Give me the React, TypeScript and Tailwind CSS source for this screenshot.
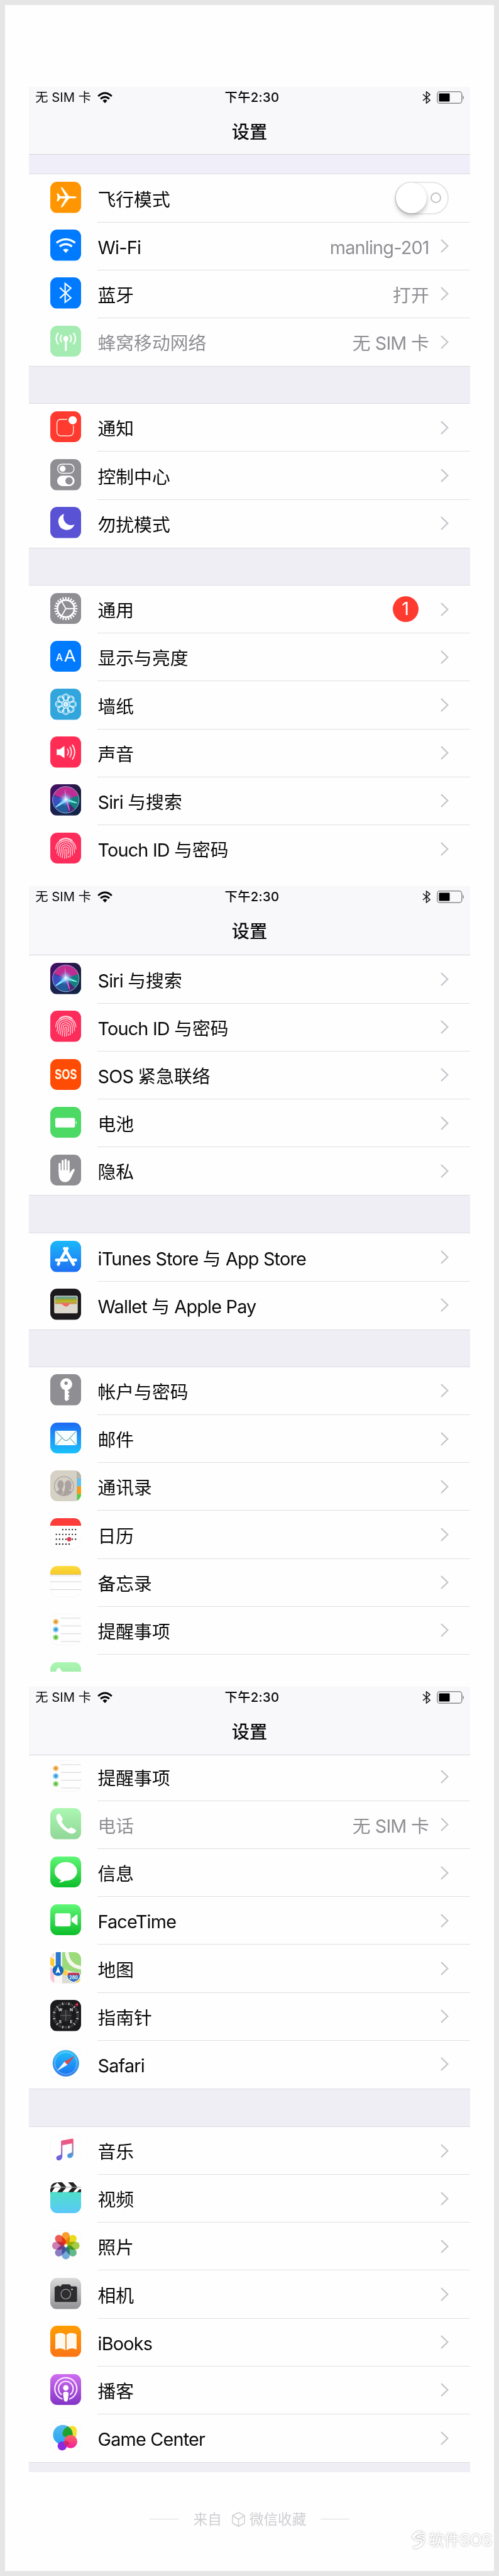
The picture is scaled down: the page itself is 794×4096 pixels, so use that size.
import type { ReactNode } from 'react';

const INK = '#a9a2a0';

const Tile = ({ fill, children }: { fill: string; children?: ReactNode }) => (
    <svg viewBox="0 0 68 68" className="block size-[49.5px] shrink-0 overflow-hidden rounded-[11px]">
        <rect width="68" height="68" fill={fill} />
        {children}
    </svg>
);

const PlainTile = ({ children }: { children: ReactNode }) => (
    <Tile fill="#fefefe">
        <rect x="0.5" y="0.5" width="67" height="67" rx="15" fill="none" stroke="#f3f2f5" />
        {children}
    </Tile>
);

const Gradient = ({ id, from, to }: { id: string; from: string; to: string }) => (
    <linearGradient id={id} x1="0" y1="0" x2="0" y2="1">
        <stop offset="0" stopColor={from} />
        <stop offset="1" stopColor={to} />
    </linearGradient>
);

const angles = (n: number) => Array.from({ length: n }, (_, i) => (i * 360) / n);

const icons: Record<string, ReactNode> = {
    airplane: (
        <Tile fill="#ff9500">
            <path
                d="M14 25.500L17.500 25.500L22 31.500L33 31.500L22.500 12.500L26.500 12.500L41 31.500L53 32Q57.500 32.500 57.500 34Q57.500 35.500 53 36L41 36.500L26.500 55.500L22.500 55.500L33 36.500L22 36.500L17.500 42.500L14 42.500L16 34Z"
                fill="#fffdf5"
            />
        </Tile>
    ),
    wifi: (
        <Tile fill="#007aff">
            <g fill="none" stroke="#f4fbff" strokeWidth="4.600">
                <path d="M13.500 29Q34 13.500 54.500 29" />
                <path d="M20.500 37Q34 27 47.500 37" />
            </g>
            <path d="M27.500 44Q34 39.500 40.500 44L34 51Z" fill="#f4fbff" />
        </Tile>
    ),
    bluetooth: (
        <Tile fill="#007aff">
            <path d="M21 22.500L45 45L32.500 54.500V13.500L45 23.500L21 45.500" fill="none" stroke="#f4fbff" strokeWidth="3" />
        </Tile>
    ),
    cellular: (
        <Tile fill="#a5ecb2">
            <circle cx="34" cy="28" r="5.500" fill="#fff" />
            <path d="M34 28V55" stroke="#fff" strokeWidth="4" />
            <g fill="none" stroke="#fff" strokeWidth="3">
                <path d="M25 20Q19 28 25 36M43 20Q49 28 43 36" />
                <path d="M17.500 15.500Q8 28 17.500 40.500M50.500 15.500Q60 28 50.500 40.500" />
            </g>
        </Tile>
    ),
    notifications: (
        <Tile fill="#ff3b30">
            <path d="M37 17.500H24Q14.500 17.500 14.500 27V44Q14.500 53.500 24 53.500H41Q50.500 53.500 50.500 44V31" fill="none" stroke="#ffe9e2" strokeWidth="1.900" />
            <circle cx="49" cy="19.500" r="9" fill="#fff" />
        </Tile>
    ),
    control: (
        <Tile fill="#8e8e93">
            <rect x="16" y="11" width="36" height="20" rx="10" fill="none" stroke="#fff" strokeWidth="2" />
            <circle cx="27" cy="21" r="6.500" fill="#fff" />
            <rect x="15" y="36" width="38" height="23" rx="11.500" fill="#fff" />
            <circle cx="41" cy="47.500" r="8" fill="#8e8e93" />
        </Tile>
    ),
    moon: (
        <Tile fill="#5a52d5">
            <path d="M30 15Q17 20 17.500 33Q19 48 34 50.500Q48 51 53 38.500Q43 42.500 35 36.500Q26 28 30 15Z" fill="#fff" />
        </Tile>
    ),
    gear: (
        <Tile fill="#8e8e93">
            <g stroke="#fff" strokeWidth="3">
                {angles(24).map((a) => (
                    <path key={a} d="M34 14V8.500" transform={`rotate(${a} 34 34)`} />
                ))}
                <circle cx="34" cy="34" r="18.500" fill="none" strokeWidth="3.600" />
                <path d="M34 34H52M34 34L25 18.400M34 34L25 49.600" strokeWidth="2.600" />
            </g>
        </Tile>
    ),
    display: (
        <Tile fill="#007aff">
            <text x="12" y="44" fontSize="22" fontWeight="500" fill="#fff" className="font-['Inter']">A</text>
            <text x="30" y="46" fontSize="35" fill="#fff" className="font-['Inter']" textLength="26" lengthAdjust="spacingAndGlyphs">A</text>
        </Tile>
    ),
    wallpaper: (
        <Tile fill="#32a6dc">
            <g fill="none" stroke="#e8faff" strokeWidth="1.800">
                {angles(8).map((a) => (
                    <g key={a} transform={`rotate(${a} 34 34)`}>
                        <circle cx="34" cy="18.500" r="7" />
                        <ellipse cx="34" cy="23" rx="4.700" ry="9.500" strokeWidth="1.200" />
                    </g>
                ))}
                <circle cx="34" cy="34" r="4" />
            </g>
        </Tile>
    ),
    sound: (
        <Tile fill="#ff2d55">
            <path d="M14 28H21L31 20.500V47.500L21 40.500H14Z" fill="#fff" />
            <g fill="none" stroke="#ffe4ea" strokeWidth="2.600">
                <path d="M37 27Q42.500 34 37 41.500" />
                <path d="M42.500 22.500Q50 34 42.500 46" />
                <path d="M48 18Q59 34 48 50.500" />
            </g>
        </Tile>
    ),
    siri: (
        <Tile fill="url(#siri-bg)">
            <defs>
                <linearGradient id="siri-bg" x1="0" y1="0" x2="1" y2="0.6">
                    <stop offset="0" stopColor="#450f68" />
                    <stop offset="1" stopColor="#142036" />
                </linearGradient>
                <radialGradient id="siri-glow">
                    <stop offset="0" stopColor="#fff" />
                    <stop offset="0.35" stopColor="#9fd8ff" stopOpacity="0.7" />
                    <stop offset="1" stopColor="#4a78e0" stopOpacity="0" />
                </radialGradient>
                <clipPath id="siri-orb">
                    <circle cx="34" cy="34" r="29" />
                </clipPath>
            </defs>
            <path d="M0 40H68V68H0Z" fill="#14264f" opacity="0.7" />
            <circle cx="34" cy="34" r="29" fill="#4b3596" />
            <g clipPath="url(#siri-orb)">
                <path d="M34 34L5 22Q18 0 40 4Q58 8 63 26Z" fill="#d42a93" opacity="0.85" />
                <path d="M34 34L62 24Q66 44 52 58Z" fill="#157f80" />
                <path d="M34 34L4 25Q0 44 12 54Z" fill="#3a4ec0" />
                <path d="M34 34L12 54Q26 66 40 63Z" fill="#225c9b" />
                <path d="M34 34L40 63Q50 62 54 55Z" fill="#4a2a78" />
            </g>
            <path d="M34 31L12 50L37 36Z" fill="#7fe9ff" stroke="#7fe9ff" strokeWidth="2" />
            <path d="M34 31L58 41L36 36Z" fill="#7dffe0" stroke="#7dffe0" strokeWidth="1.500" />
            <path d="M33 31L42 58L37 34Z" fill="#ef6be0" stroke="#ef6be0" strokeWidth="1.500" />
            <path d="M36 33L32 9L31 34Z" fill="#ff9ade" opacity="0.7" />
            <circle cx="34" cy="33" r="16" fill="url(#siri-glow)" />
            <circle cx="34" cy="34" r="29" fill="none" stroke="#a3b7dc" strokeWidth="1.300" />
        </Tile>
    ),
    touch: (
        <Tile fill="#fc2d5a">
            <g fill="none" stroke="#ffd3dc" strokeWidth="1.800" strokeLinecap="round">
                <path d="M20 17Q34 7 48 17" />
                <path d="M12 36Q12 28 16.500 22Q34 5.500 51 22Q56 28 56 36" />
                <path d="M14.500 45Q16 41 16 34C16.500 12 51.500 12 52 34Q53 40 53 44" />
                <path d="M17.500 49.500Q20 43 20 35C20 17.500 48 17.500 48 35Q49 43 48.500 49" />
                <path d="M21.500 52.500Q24 44 24 36C24 23 44 23 44 36Q45 46 43.500 52.500" />
                <path d="M26 55Q28 45 28 37C28 29 40 29 40 37V46M40 51V54" />
                <path d="M31 56Q32.500 46 32 37.500Q34 33.500 36 37.500Q37 47 35.500 55.500" />
            </g>
        </Tile>
    ),
    sos: (
        <Tile fill="#ff4c05">
            <text x="34" y="44.500" textAnchor="middle" fontSize="29" fontWeight="700" fill="#fff6e6" className="font-['Inter']" textLength="49" lengthAdjust="spacingAndGlyphs">SOS</text>
        </Tile>
    ),
    battery: (
        <Tile fill="#4cd964">
            <rect x="11" y="24" width="43" height="21" rx="2.500" fill="#fff" />
            <path d="M56 30Q59.500 34.500 56 39Z" fill="#fff" />
        </Tile>
    ),
    privacy: (
        <Tile fill="#8e8e93">
            <g stroke="#fff" strokeWidth="4.600" strokeLinecap="round">
                <path d="M20.500 20V36M27 13.500V34M33.500 11.500V34M40 14.500V36" />
            </g>
            <path d="M18.200 34H42.300V41Q46 34 49.500 31.500Q53 30 53.500 33Q48 46 44 53Q40 60 32 60Q22 59 19.500 50Q18 44 18.200 34Z" fill="#fff" />
        </Tile>
    ),
    appstore: (
        <Tile fill="url(#appstore)">
            <defs><Gradient id="appstore" from="#1cb8fb" to="#1e6ff2" /></defs>
            <g stroke="#fff" strokeWidth="6.500" strokeLinecap="round">
                <path d="M37 16.500L22.500 42M19 48.500L17.500 51.500M31 16.500L51 51.500M13.500 42H36M48 42H55.500" />
            </g>
        </Tile>
    ),
    wallet: (
        <Tile fill="#1d1a1e">
            <rect x="8.500" y="15.500" width="51.500" height="38.500" rx="3.500" fill="#dcd8cd" />
            <path d="M10.500 19Q10.500 17 12.500 17H56Q58 17 58 19V23H10.500Z" fill="#6aa193" />
            <path d="M10.500 21.500H58V26H10.500Z" fill="#98a63a" />
            <path d="M10.500 25H58V30H10.500Z" fill="#b9b521" />
            <path d="M10.500 29.500H58V33.500H10.500Z" fill="#c19a4d" />
            <path d="M24 32H44Q42 33.500 40.500 36Q34.500 42.500 28 36Q26 33.500 24 33.500Z" fill="#f3695c" />
        </Tile>
    ),
    key: (
        <Tile fill="#8e8e93">
            <path d="M34.500 9A13 13 0 0 1 38.500 34.500L38.500 36L42 39L38.500 43L42 48L38.500 52L42 53.500L35.500 59L31.500 55.500V34.500A13 13 0 0 1 34.500 9Z" fill="#fff" />
            <circle cx="34.500" cy="19.500" r="3.700" fill="#8e8e93" />
        </Tile>
    ),
    mail: (
        <Tile fill="url(#mail)">
            <defs><Gradient id="mail" from="#1e6bf3" to="#1bc2fb" /></defs>
            <rect x="10.500" y="18" width="47.500" height="31.500" rx="2.500" fill="#f6fefe" />
            <path d="M12 19L30 37.500Q34.500 41 39 37.500L56.500 19M12 48.500L25.500 34M56.500 48.500L43 34" fill="none" stroke="#6fa3b0" strokeWidth="1.500" />
        </Tile>
    ),
    contacts: (
        <Tile fill="#d6d1c5">
            <path d="M59 0H68V18H59Z" fill="#b8b5ae" />
            <path d="M59 18H68V35H59Z" fill="#5ac2f5" />
            <path d="M59 35H68V52H59Z" fill="#fb9a0c" />
            <path d="M59 52H68V68H59Z" fill="#4fcf45" />
            <path d="M58.600 2V67" stroke="#a9a9a0" strokeWidth="1.200" />
            <clipPath id="contacts-ring"><circle cx="30" cy="34.500" r="20.500" /></clipPath>
            <g clipPath="url(#contacts-ring)" fill={INK}>
                <ellipse cx="39" cy="31" rx="7.500" ry="9.500" />
                <path d="M31 42Q33 38 34 31H44.500Q45 39 47 42H40Q42 45 52 47V58H24Z" />
                <ellipse cx="22.500" cy="31" rx="7.500" ry="10" stroke="#d6d1c5" strokeWidth="1.200" />
                <path d="M19 38H26V43Q26 46 31 47Q26 55 22 57H4V48Q19 46 19 42Z" />
                <path d="M31 43Q28 52 22 55" stroke="#d6d1c5" strokeWidth="1.400" fill="none" />
            </g>
            <circle cx="30" cy="34.500" r="21" fill="none" stroke={INK} strokeWidth="1.700" />
        </Tile>
    ),
    calendar: (
        <PlainTile>
            <rect width="68" height="16.500" fill="#fc3d39" />
            {[25, 35.5, 46, 56.5].map((y, row) =>
                [0, 1, 2, 3, 4, 5, 6]
                    .filter((col) => (row === 0 ? col > 1 : row === 3 ? col < 5 : true))
                    .map((col) => <circle key={`${row}-${col}`} cx={13.3 + col * 7} cy={y} r="1.600" fill="#222" />),
            )}
            <circle cx="41.300" cy="46" r="4.700" fill="#dc3c48" />
        </PlainTile>
    ),
    notes: (
        <PlainTile>
            <defs><Gradient id="notes" from="#fddb3f" to="#f6c927" /></defs>
            <rect width="68" height="18.500" fill="url(#notes)" />
            <path d="M0 19H68" stroke="#c9b780" strokeWidth="1.300" />
            <path d="M1 22H68" stroke="#c4c0b8" strokeWidth="1.200" strokeDasharray="1.200 2.300" />
            <path d="M0 34.500H68M0 51.500H68" stroke="#cfcdd2" strokeWidth="1.200" />
        </PlainTile>
    ),
    reminders: (
        <PlainTile>
            <path d="M23 9.500H68M23 26.500H68M23 43.500H68M23 60.500H68" stroke="#cfcdd4" strokeWidth="1.200" />
            {[
                ['#f7c67e', '#dc942c', 17.5],
                ['#86cbf3', '#2f97d8', 34.5],
                ['#a4e08d', '#56b83e', 51.5],
            ].map(([halo, dot, y]) => (
                <g key={y}>
                    <circle cx="12" cy={y} r="6.300" fill={halo as string} />
                    <circle cx="12" cy={y} r="3.200" fill={dot as string} />
                </g>
            ))}
        </PlainTile>
    ),
    phone: (
        <Tile fill="url(#phone)">
            <defs><Gradient id="phone" from="#abf7b2" to="#91d798" /></defs>
            <path d="M17 13Q13 15 13 20Q14 31 24 42Q36 54 47 56Q52 56 55.500 52Q57.500 49 55 47L47 42.500Q44.500 41.500 42.500 43.500L40 46Q31 41 24.500 29.500L26.500 26.500Q28 24.500 26.500 22L21.500 14Q20 11.500 17 13Z" fill="#fff" />
        </Tile>
    ),
    messages: (
        <Tile fill="url(#messages)">
            <defs><Gradient id="messages" from="#5ff777" to="#0cbd2a" /></defs>
            <ellipse cx="34" cy="32.500" rx="24.500" ry="20.500" fill="#fff" />
            <path d="M25 49Q23.500 54.500 18.500 56.500Q28 57 33 51Z" fill="#fff" />
        </Tile>
    ),
    facetime: (
        <Tile fill="url(#facetime)">
            <defs><Gradient id="facetime" from="#5ff777" to="#0cbd2a" /></defs>
            <rect x="10.500" y="19.500" width="34" height="28.500" rx="4" fill="#fff" />
            <path d="M46.500 31L56.500 23Q59.500 21.500 59.500 24V44Q59.500 46 56.500 44.500L46.500 37Z" fill="#fff" />
        </Tile>
    ),
    maps: (
        <Tile fill="#f6f3ec">
            <path d="M26 0H68V50L26 36Z" fill="#9cdb7c" />
            <path d="M36 0Q39 31 68 34" fill="none" stroke="#f7f6ee" strokeWidth="8" />
            <path d="M0 10L9 16V34L0 27Z" fill="#fdc930" />
            <path d="M24 34L68 60V68H60L24 46Z" fill="#fccb3e" />
            <path d="M25 46L60 68H25Z" fill="#dcdcd6" />
            <path d="M0 33L9 39V68H0Z" fill="#f6c5d8" />
            <path d="M0 0H9V12L0 6Z" fill="#f3ddd9" />
            <rect x="9" width="17" height="68" fill="#faf9f8" />
            <rect x="12" width="11" height="36" fill="#2a79cf" />
            <circle cx="17" cy="40" r="12" fill="#1469c1" />
            <path d="M17 31L22.500 47L17 43.500L11.500 47Z" fill="#fff" />
            <path d="M40 44Q45 46 51 43.500Q57 46 62 44Q67 50 64 57Q61 63 51 66Q41 63 38 57Q35 50 40 44Z" fill="#2d73bd" stroke="#fff" strokeWidth="1.400" />
            <path d="M40 45H62L64.500 50H37.500Z" fill="#c43752" />
            <text x="51" y="59" textAnchor="middle" fontSize="9.500" fontWeight="700" fill="#fff" className="font-['Inter']">280</text>
        </Tile>
    ),
    compass: (
        <Tile fill="#1a191b">
            <circle cx="34" cy="34" r="13" fill="#2c2b2d" />
            <g stroke="#77767a" strokeWidth="1.100">
                {angles(48).map((a) => (
                    <path key={a} d="M34 5V10.500" transform={`rotate(${a + 3} 34 34)`} />
                ))}
            </g>
            <g stroke="#e8e8e8" strokeWidth="1.500">
                {angles(12).map((a) => (
                    <path key={a} d="M34 5V10.500" transform={`rotate(${a + 15} 34 34)`} />
                ))}
            </g>
            <path d="M34 22V46M22 34H46" stroke="#6b6a6c" strokeWidth="1.500" />
            <path d="M61 6L60 14.500L53.500 10Z" fill="#e3304a" />
            <g fontSize="9" fontWeight="700" fill="#e6e6e6" textAnchor="middle" className="font-['Inter']">
                <text x="22" y="24.500">W</text>
                <text x="46" y="24.500">N</text>
                <text x="22" y="50.500">S</text>
                <text x="46" y="50.500">E</text>
            </g>
        </Tile>
    ),
    safari: (
        <PlainTile>
            <defs><Gradient id="safari" from="#1fc0fa" to="#1c6ff0" /></defs>
            <circle cx="34" cy="34" r="28.500" fill="url(#safari)" stroke="#6f9fc4" strokeWidth="1" />
            <g stroke="#bfe4ff" strokeWidth="0.800">
                {angles(60).map((a) => (
                    <path key={a} d="M34 8V11.500" transform={`rotate(${a} 34 34)`} />
                ))}
            </g>
            <path d="M54 17.500L37.500 37.500L31 30.500Z" fill="#dd4850" />
            <path d="M14 51L31 30.500L37.500 37.500Z" fill="#f2f7fb" />
        </PlainTile>
    ),
    music: (
        <PlainTile>
            <defs>
                <linearGradient id="music" gradientUnits="userSpaceOnUse" x1="40" y1="10" x2="30" y2="56">
                    <stop offset="0" stopColor="#f2567c" />
                    <stop offset="0.35" stopColor="#dd5e94" />
                    <stop offset="0.75" stopColor="#7a6de0" />
                    <stop offset="1" stopColor="#6660dd" />
                </linearGradient>
                <Gradient id="music-right" from="#e3588a" to="#35a4ee" />
            </defs>
            <path d="M23.500 15.500Q23.500 13.500 25.500 13L48.500 9Q50.500 9 50.500 11V19L26.500 23.500V48Q26 55 19 56.500Q13.500 56.500 13 51.500Q13.500 46.500 20 45.500Q23.500 45 23.500 42Z" fill="url(#music)" />
            <path d="M47.500 18L50.500 17.500V43Q50 50 43 51.500Q37.500 51.500 37 46.500Q37.500 41.500 44 40.500Q47.500 40 47.500 37Z" fill="url(#music-right)" />
        </PlainTile>
    ),
    videos: (
        <Tile fill="#fff">
            <defs><Gradient id="videos" from="#4fdfc8" to="#5ac8fa" /></defs>
            <rect y="21" width="68" height="47" fill="url(#videos)" />
            <g fill="#232323">
                <path d="M9 1L16 0L12 4L5 10H-2V5Z" />
                <path d="M15 0H26L35 10H24Z" />
                <path d="M39 0H50L59 10H48Z" />
                <path d="M24 11.500H35L26 21.500H15Z" />
                <path d="M48 11.500H59L50 21.500H39Z" />
                <path d="M2 11.500H10L3 21.500H-5Z" />
                <path d="M64 15H72V21.500H58Z" />
            </g>
            <path d="M0 10.700H68" stroke="#555" strokeWidth="0.800" />
        </Tile>
    ),
    photos: (
        <PlainTile>
            {['#f9a030', '#e9dd1f', '#a7cc45', '#63b98c', '#74acdc', '#8c7cc0', '#cd7fb4', '#ef5b55'].map((fill, i) => (
                <rect key={fill} x="25.500" y="4" width="17" height="27" rx="8.500" fill={fill} transform={`rotate(${i * 45} 34 34)`} className="mix-blend-multiply" />
            ))}
        </PlainTile>
    ),
    camera: (
        <Tile fill="url(#camera)">
            <defs><Gradient id="camera" from="#dadadb" to="#929294" /></defs>
            <path d="M13 19Q13.500 17 15.500 17H18Q20 17 20.500 18.500L23 18.500Q25 14 27 14H41.500Q43.500 14 45.500 18.500H55Q58.500 18.500 58.500 22V49Q58.500 52.500 55 52.500H13Q9.500 52.500 9.500 49V22Q9.500 19 13 19Z" fill="#2d2d2f" />
            <circle cx="34" cy="35.500" r="10.500" fill="none" stroke="#a5a5a7" strokeWidth="1.600" />
            <circle cx="47.500" cy="25" r="1.800" fill="#c9c9ca" />
        </Tile>
    ),
    books: (
        <Tile fill="url(#books)">
            <defs><Gradient id="books" from="#ff9d00" to="#fa7417" /></defs>
            <path d="M33 20Q27 14 17 16.500Q11 18 11 20V52Q22 46 33 53.500Z" fill="#fff8ee" />
            <path d="M35.500 20Q41 14 51 16.500Q57.500 18 57.500 20V52Q46 46 35.500 53.500Z" fill="#fff8ee" />
        </Tile>
    ),
    podcasts: (
        <Tile fill="url(#podcasts)">
            <defs><Gradient id="podcasts" from="#cf6df0" to="#8234c4" /></defs>
            <g fill="none" stroke="#fbe9ff" strokeWidth="3">
                <path d="M26.500 54.500A24 24 0 1 1 41.500 54.500" />
                <path d="M25 45A16 16 0 1 1 43 45" />
            </g>
            <circle cx="34" cy="30" r="6" fill="#fff" />
            <path d="M28 43Q28 38.500 34 38.500Q40 38.500 40 43L38.500 55Q38 60 34 60Q30 60 29.500 55Z" fill="#fff" />
        </Tile>
    ),
    game: (
        <PlainTile>
            <defs>
                <Gradient id="game-blue" from="#57b9ee" to="#25a5f5" />
                <Gradient id="game-pink" from="#fb6a5e" to="#f5199c" />
            </defs>
            <rect x="37" y="9" width="21" height="26" rx="9" fill="#f6e02c" />
            <circle cx="27.500" cy="28" r="21.500" fill="url(#game-blue)" />
            <path d="M38 9.500Q49 16 49 28Q48 32 44 35Q35 37 27 29Q25 17 38 9.500Z" fill="#1fa22f" />
            <circle cx="26" cy="52.500" r="10" fill="#8b2be0" />
            <circle cx="44.500" cy="43" r="14.500" fill="url(#game-pink)" />
            <path d="M30 43Q36 38 42 46Q38 54 33 52Z" fill="#c0245e" opacity="0.75" />
        </PlainTile>
    ),
};

type Item = {
    icon: string;
    label: string;
    value?: string;
    toggle?: boolean;
    badge?: string;
    disabled?: boolean;
};

// Latin runs sit a little tighter than the Chinese characters around them
const Label = ({ text }: { text: string }) => (
    <>
        {text.split(/([\x20-\x7e]+)/).map((part, i) => (
            <span key={i} className={i % 2 ? 'tracking-[-0.8px]' : ''}>{part}</span>
        ))}
    </>
);

const Chevron = () => (
    <svg viewBox="0 0 13 22" className="h-[22px] w-[13px] shrink-0" fill="none" stroke="#c5c4ca" strokeWidth="2.300">
        <path d="M1 1L11.300 11L1 21" />
    </svg>
);

const Toggle = () => (
    <div className="relative flex h-[52px] w-[85.500px] items-center justify-end rounded-full border-2 border-[#e6e5e8] bg-white pr-[10px]">
        <div className="absolute -top-px left-0 size-[49px] rounded-full bg-white shadow-[0_5px_7px_rgba(0,0,0,0.22),0_0_2px_rgba(0,0,0,0.18)]" />
        <div className="size-[17px] rounded-full border-2 border-[#c3c2c6]" />
    </div>
);

const Row = ({ item, last }: { item: Item; last: boolean }) => (
    <div className="flex h-[76.200px] w-full shrink-0 bg-[#fefefe] pl-[33.700px]">
        <div className="pt-[11.700px]">{icons[item.icon]}</div>
        <div className={`ml-[26px] flex flex-1 items-center border-b pr-[34px] ${last ? 'border-transparent' : 'border-[#e0dee4]'}`}>
            <span className={`relative top-[3px] whitespace-pre ${item.disabled ? 'text-[#8f8e93]' : 'text-[#0a0a0a]'}`}>
                <Label text={item.label} />
            </span>
            <div className="ml-auto flex items-center">
                {item.value && (
                    <span className="relative top-[3px] mr-[18px] whitespace-pre text-[#8f8e93]">
                        <Label text={item.value} />
                    </span>
                )}
                {item.badge && (
                    <span className="mr-[35px] flex size-[41px] items-center justify-center rounded-full bg-[#ff3b30] text-white">{item.badge}</span>
                )}
                {item.toggle ? <Toggle /> : <Chevron />}
            </div>
        </div>
    </div>
);

const Group = ({ items, open = false }: { items: Item[]; open?: boolean }) => (
    <>
        {items.map((item, i) => (
            <Row key={item.label} item={item} last={!open && i === items.length - 1} />
        ))}
    </>
);

const Gap = ({ className }: { className: string }) => (
    <div className={`shrink-0 border-y border-[#dddbe1] bg-[#f0eef5] ${className}`} />
);

const Header = ({ className }: { className: string }) => (
    <div className={`shrink-0 border-b-[1.500px] border-[#d5d4d8] bg-[#f8f8fa] ${className}`}>
        <div className="grid h-[34px] grid-cols-3 items-center pr-[8px] pl-[10px] text-[20.300px] leading-none text-[#0a0a0a]">
            <div className="flex items-center gap-[10px]">
                <span className="whitespace-nowrap">无 SIM 卡</span>
                <svg viewBox="0 0 24 18" className="h-[18px] w-[24px]" fill="none" stroke="#050505" strokeWidth="3">
                    <path d="M1.200 7Q12 -3 22.800 7" />
                    <path d="M5 11.200Q12 5 19 11.200" />
                    <path d="M8.300 14Q12 10.500 15.700 14L12 18Z" fill="#050505" stroke="none" />
                </svg>
            </div>
            <span className="pl-[6px] text-center font-medium tracking-[0.3px]">下午2:30</span>
            <div className="flex items-center justify-end gap-[10px]">
                <svg viewBox="0 0 13 20" className="h-[20px] w-[13px]" fill="none" stroke="#111" strokeWidth="1.500">
                    <path d="M1 5L12 14.500L6.500 19V1L12 5.500L1 15" />
                </svg>
                <svg viewBox="0 0 45 20" className="h-[20px] w-[45px]">
                    <rect x="0.800" y="0.800" width="39" height="18.400" rx="4" fill="none" stroke="#8b8a8d" strokeWidth="1.500" />
                    <rect x="3.500" y="3.500" width="17" height="13" rx="1" fill="#000" />
                    <path d="M41.500 6.500Q45 10 41.500 13.500Z" fill="#8b8a8d" />
                </svg>
            </div>
        </div>
        <div className="flex h-[72px] items-center justify-center pt-[4px] text-[28.300px] font-medium text-[#0a0a0a]">设置</div>
    </div>
);

const siri: Item = { icon: 'siri', label: 'Siri 与搜索' };
const touchId: Item = { icon: 'touch', label: 'Touch ID 与密码' };
const reminders: Item = { icon: 'reminders', label: '提醒事项' };
const phone: Item = { icon: 'phone', label: '电话', value: '无 SIM 卡', disabled: true };

const network: Item[] = [
    { icon: 'airplane', label: '飞行模式', toggle: true },
    { icon: 'wifi', label: 'Wi-Fi', value: 'manling-201' },
    { icon: 'bluetooth', label: '蓝牙', value: '打开' },
    { icon: 'cellular', label: '蜂窝移动网络', value: '无 SIM 卡', disabled: true },
];

const alerts: Item[] = [
    { icon: 'notifications', label: '通知' },
    { icon: 'control', label: '控制中心' },
    { icon: 'moon', label: '勿扰模式' },
];

const general: Item[] = [
    { icon: 'gear', label: '通用', badge: '1' },
    { icon: 'display', label: '显示与亮度' },
    { icon: 'wallpaper', label: '墙纸' },
    { icon: 'sound', label: '声音' },
    siri,
    touchId,
];

const security: Item[] = [
    siri,
    touchId,
    { icon: 'sos', label: 'SOS 紧急联络' },
    { icon: 'battery', label: '电池' },
    { icon: 'privacy', label: '隐私' },
];

const store: Item[] = [
    { icon: 'appstore', label: 'iTunes Store 与 App Store' },
    { icon: 'wallet', label: 'Wallet 与 Apple Pay' },
];

const accounts: Item[] = [
    { icon: 'key', label: '帐户与密码' },
    { icon: 'mail', label: '邮件' },
    { icon: 'contacts', label: '通讯录' },
    { icon: 'calendar', label: '日历' },
    { icon: 'notes', label: '备忘录' },
    reminders,
];

const apps: Item[] = [
    phone,
    { icon: 'messages', label: '信息' },
    { icon: 'facetime', label: 'FaceTime' },
    { icon: 'maps', label: '地图' },
    { icon: 'compass', label: '指南针' },
    { icon: 'safari', label: 'Safari' },
];

const media: Item[] = [
    { icon: 'music', label: '音乐' },
    { icon: 'videos', label: '视频' },
    { icon: 'photos', label: '照片' },
    { icon: 'camera', label: '相机' },
    { icon: 'books', label: 'iBooks' },
    { icon: 'podcasts', label: '播客' },
    { icon: 'game', label: 'Game Center' },
];

const Screen = ({ className, children }: { className: string; children: ReactNode }) => (
    <div className={`flex flex-col overflow-hidden ${className}`}>{children}</div>
);

const Footer = () => (
    <div className="mt-[57px] flex h-[36px] items-center justify-center text-[22.600px] text-[#cfced2]">
        <div className="h-px w-[46px] bg-[#dcdbde]" />
        <span className="ml-[24px]">来自</span>
        <svg viewBox="0 0 21 24" className="mr-[7px] ml-[16px] h-[24px] w-[21px]" fill="none" stroke="#cfced2" strokeWidth="1.500" strokeLinejoin="round">
            <path d="M10.500 1L20 6V18L10.500 23L1 18V6ZM1 6L10.500 12L20 6M10.500 12V23" />
        </svg>
        <span>微信收藏</span>
        <div className="ml-[23px] h-px w-[46px] bg-[#dcdbde]" />
    </div>
);

const Watermark = () => (
    <div className="absolute right-[3px] bottom-[31px] flex items-center gap-[5px] text-[25px] leading-[36px] text-white [text-shadow:0_0_3px_rgba(0,0,0,0.35)]">
        <svg viewBox="0 0 22 30" className="h-[30px] w-[22px] drop-shadow-[0_0_1.500px_rgba(0,0,0,0.35)]" fill="none" stroke="#fff" strokeWidth="2.600" strokeLinecap="round">
            <path d="M19 4Q4 4 4 11Q5 15 14 15Q19 17 14 22Q10 26 3 27" />
            <path d="M15 1Q2 4 1.500 12M20 8Q10 7 9 10Q18 11 20 15Q19 24 7 28" strokeWidth="1.800" />
        </svg>
        <span className="whitespace-nowrap">软件SOS</span>
    </div>
);

const App = () => (
    <div className="relative h-[4096px] w-[794px] overflow-hidden border-8 border-[#e6e6e6] bg-[#fefefe] font-['Inter','Noto_Sans_CJK_SC',sans-serif]">
        <div className="mt-[130.200px] ml-[38.300px] w-[701.400px] text-[28.800px] leading-none">
            <Screen className="h-[1271.300px]">
                <Header className="h-[108.200px]" />
                <div className="h-[31px] shrink-0 border-b border-[#dddbe1] bg-[#f0eef8]" />
                <Group items={network} />
                <Gap className="h-[60px]" />
                <Group items={alerts} />
                <Gap className="h-[60.300px]" />
                <Group items={general} />
            </Screen>
            <Screen className="h-[1249px]">
                <Header className="h-[110px]" />
                <Group items={security} />
                <Gap className="h-[61px]" />
                <Group items={store} />
                <Gap className="h-[60px]" />
                <Group items={accounts} open />
                <div className="shrink-0 pt-[11.700px] pl-[33.700px]">{icons.phone}</div>
            </Screen>
            <Screen className="mt-[23.500px] h-[1249px]">
                <Header className="h-[109px]" />
                <div className="flex h-[72.800px] shrink-0 items-end overflow-hidden">
                    <Group items={[reminders]} open />
                </div>
                <Group items={apps} />
                <Gap className="h-[61px]" />
                <Group items={media} />
                <div className="h-[16px] shrink-0 border-t border-[#dddbe1] bg-[#f0eef5]" />
            </Screen>
        </div>
        <Footer />
        <Watermark />
    </div>
);

export default App;
